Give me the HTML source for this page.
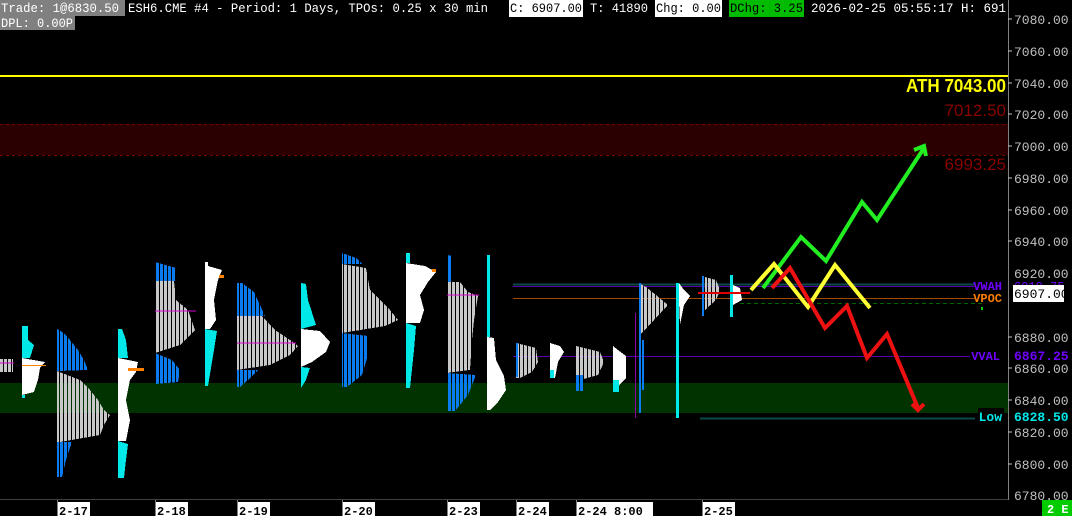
<!DOCTYPE html>
<html><head><meta charset="utf-8"><style>
html,body{margin:0;padding:0;background:#000;width:1072px;height:516px;overflow:hidden}
svg{display:block}
text{font-family:"Liberation Mono","DejaVu Sans Mono",monospace}
</style></head><body>
<svg width="1072" height="516" viewBox="0 0 1072 516" xmlns="http://www.w3.org/2000/svg">
<defs>
<pattern id="g" width="4" height="4" patternUnits="userSpaceOnUse"><rect x="0" y="0" width="3" height="4" fill="#c8c8c8"/></pattern>
<pattern id="b" width="4" height="4" patternUnits="userSpaceOnUse"><rect x="0" y="0" width="3" height="4" fill="#0a7cf0"/></pattern>
</defs>
<rect width="1072" height="516" fill="#000"/>
<rect x="0" y="383" width="1008" height="30" fill="#003300"/>
<rect x="0" y="124" width="1008" height="31" fill="#2a0000"/>
<line x1="0" y1="124.5" x2="1008" y2="124.5" stroke="#7a0000" stroke-dasharray="3,3"/>
<line x1="0" y1="155.5" x2="1008" y2="155.5" stroke="#7a0000" stroke-dasharray="3,3"/>
<rect x="0" y="75" width="1008" height="2" fill="#ffff00"/>
<text x="906" y="92" textLength="100" lengthAdjust="spacingAndGlyphs" font-size="18" font-weight="bold" fill="#ffff00" style="font-family:'Liberation Sans',sans-serif">ATH 7043.00</text>
<text x="1006" y="116" text-anchor="end" font-size="17" fill="#8a0000" style="font-family:'Liberation Sans',sans-serif">7012.50</text>
<text x="1006" y="170" text-anchor="end" font-size="17" fill="#8a0000" style="font-family:'Liberation Sans',sans-serif">6993.25</text>

<line x1="513" y1="284.5" x2="975" y2="284.5" stroke="#0d4a4a" stroke-width="2"/>
<line x1="513" y1="286.5" x2="975" y2="286.5" stroke="#5a00b0"/>
<line x1="513" y1="298.5" x2="975" y2="298.5" stroke="#a04800"/>
<line x1="740" y1="303.5" x2="985" y2="303.5" stroke="#006600" stroke-dasharray="4,3"/>
<line x1="513" y1="356.5" x2="970" y2="356.5" stroke="#5a00b0"/>
<line x1="700" y1="418.5" x2="975" y2="418.5" stroke="#0d4a4a" stroke-width="2"/>

<g shape-rendering="crispEdges">
<rect x="0" y="359" width="13" height="13" fill="url(#g)"/>
<line x1="0" y1="363" x2="14" y2="363" stroke="#d000d0"/>
<polygon points="22,326 28,326 28,340 34,345 30,358 22,358" fill="#00e8e8"/>
<polygon points="22,358 45,362 40,368 38,380 34,392 22,395" fill="#fff"/>
<rect x="22" y="395" width="3" height="3" fill="#00e8e8"/>
<rect x="22" y="365" width="24" height="1" fill="#ff8000"/>
<polygon points="57,329 64,333 70,340 78,350 84,360 88,370 57,371" fill="url(#b)"/>
<polygon points="57,371 80,380 90,390 98,400 104,410 110,415 104,425 100,435 60,442 57,442" fill="url(#g)"/>
<polygon points="57,442 72,442 66,460 62,477 57,477" fill="url(#b)"/>
<polygon points="118,329 122,329 126,340 128,358 118,358" fill="#00e8e8"/>
<polygon points="118,358 138,362 136,372 130,380 126,400 130,420 126,441 118,441" fill="#fff"/>
<polygon points="118,441 128,444 126,460 124,478 118,478" fill="#00e8e8"/>
<rect x="128" y="368" width="16" height="3" fill="#ff8000"/>
<polygon points="155,262 176,268 176,281 155,281" fill="url(#b)"/>
<polygon points="155,281 174,281 176,300 188,310 195,330 180,345 155,353" fill="url(#g)"/>
<polygon points="155,353 172,360 180,370 178,382 155,384" fill="url(#b)"/>
<line x1="155" y1="311" x2="196" y2="311" stroke="#d000d0"/>
<polygon points="205,262 208,262 208,266 222,270 218,280 214,300 216,320 210,329 205,329" fill="#fff"/>
<polygon points="205,329 217,331 214,350 208,386 205,386" fill="#00e8e8"/>
<rect x="219" y="275" width="5" height="3" fill="#ff8000"/>
<polygon points="237,283 242,283 254,292 265,316 237,316" fill="url(#b)"/>
<polygon points="237,316 262,316 275,330 290,340 298,346 290,355 270,365 237,370" fill="url(#g)"/>
<polygon points="237,370 258,370 248,380 240,387 237,387" fill="url(#b)"/>
<line x1="237" y1="343" x2="296" y2="343" stroke="#d000d0"/>
<polygon points="301,283 306,284 308,300 316,325 301,329" fill="#00e8e8"/>
<polygon points="301,329 320,331 330,342 326,352 312,362 301,367" fill="#fff"/>
<polygon points="301,367 310,368 306,380 301,388" fill="#00e8e8"/>
<polygon points="342,253 356,258 362,264 342,264" fill="url(#b)"/>
<polygon points="342,264 366,268 370,290 380,300 390,310 398,320 385,326 342,333" fill="url(#g)"/>
<polygon points="342,333 368,336 368,355 362,375 347,387 342,387" fill="url(#b)"/>
<polygon points="406,253 410,253 410,263 406,263" fill="#00e8e8"/>
<polygon points="406,263 425,266 436,272 428,282 420,295 424,310 420,323 406,323" fill="#fff"/>
<polygon points="406,323 416,326 414,350 410,388 406,388" fill="#00e8e8"/>
<rect x="432" y="269" width="4" height="3" fill="#ff8000"/>
<polygon points="447,255 452,256 452,282 447,282" fill="url(#b)"/>
<polygon points="447,282 460,282 468,292 478,296 474,320 472,340 470,370 447,373" fill="url(#g)"/>
<polygon points="447,373 476,375 468,395 455,411 447,411" fill="url(#b)"/>
<line x1="447" y1="295" x2="479" y2="295" stroke="#d000d0"/>
<polygon points="487,255 490,255 490,337 487,337" fill="#00e8e8"/>
<polygon points="487,337 494,338 496,360 504,376 506,390 498,402 490,410 487,410" fill="#fff"/>
<polygon points="516,343 536,348 538,362 532,372 520,378 516,378" fill="url(#g)"/>
<rect x="516" y="343" width="2" height="34" fill="#0a7cf0"/>
<polygon points="550,343 560,346 564,352 558,362 555,378 550,378" fill="#fff"/>
<rect x="550" y="370" width="4" height="8" fill="#00e8e8"/>
<polygon points="576,346 600,352 604,362 598,375 580,380 576,391" fill="url(#g)"/>
<rect x="576" y="375" width="8" height="16" fill="url(#b)"/>
<polygon points="613,346 618,350 626,356 626,378 613,392" fill="#fff"/>
<rect x="613" y="380" width="6" height="12" fill="#00e8e8"/>
<polygon points="639,283 646,287 656,295 668,305 640,335" fill="url(#g)"/>
<rect x="639" y="283" width="2" height="130" fill="#0a7cf0"/>
<rect x="642" y="340" width="2" height="50" fill="#0a7cf0"/>
<rect x="635" y="313" width="1" height="105" fill="#9000a0"/>
<rect x="676" y="283" width="3" height="135" fill="#00e8e8"/>
<polygon points="679,283 684,290 690,296 684,305 680,325 679,300" fill="#fff"/>
<rect x="702" y="276" width="2" height="40" fill="#0a7cf0"/>
<polygon points="705,277 716,280 720,290 716,300 705,310" fill="url(#g)"/>
<rect x="730" y="275" width="3" height="42" fill="#00e8e8"/>
<polygon points="733,285 740,288 742,300 733,305" fill="#fff"/>
<rect x="698" y="292" width="52" height="2" fill="#e00000"/>
</g>

<g fill="none" stroke-width="4" stroke-linejoin="miter">
<polyline points="763,288 801,237 826,261 862,202 877,220 924,148" stroke="#22ee22"/>
<polyline points="914,150 924,146 926,156" stroke="#22ee22"/>
<polyline points="751,290 774,264 808,307 835,265 870,308" stroke="#ffff33"/>
<polyline points="772,288 790,268 825,328 847,306 867,358 887,334 918,408" stroke="#ee1111"/>
<polyline points="912,404 918,410 924,404" stroke="#ee1111"/>
</g>

<line x1="1008.5" y1="0" x2="1008.5" y2="500" stroke="#808080"/>
<g font-size="13" fill="#c0c0c0">
<text x="1014" y="24">7080.00</text>
<text x="1014" y="56">7060.00</text>
<text x="1014" y="88">7040.00</text>
<text x="1014" y="119">7020.00</text>
<text x="1014" y="151">7000.00</text>
<text x="1014" y="183">6980.00</text>
<text x="1014" y="215">6960.00</text>
<text x="1014" y="246">6940.00</text>
<text x="1014" y="278">6920.00</text>
<text x="1014" y="342">6880.00</text>
<text x="1014" y="373">6860.00</text>
<text x="1014" y="405">6840.00</text>
<text x="1014" y="437">6820.00</text>
<text x="1014" y="469">6800.00</text>
<text x="1014" y="500">6780.00</text>
</g>
<g stroke="#c0c0c0"><line x1="1008" y1="19" x2="1012" y2="19"/><line x1="1008" y1="51" x2="1012" y2="51"/><line x1="1008" y1="83" x2="1012" y2="83"/><line x1="1008" y1="114" x2="1012" y2="114"/><line x1="1008" y1="146" x2="1012" y2="146"/><line x1="1008" y1="178" x2="1012" y2="178"/><line x1="1008" y1="210" x2="1012" y2="210"/><line x1="1008" y1="241" x2="1012" y2="241"/><line x1="1008" y1="337" x2="1012" y2="337"/><line x1="1008" y1="368" x2="1012" y2="368"/><line x1="1008" y1="400" x2="1012" y2="400"/><line x1="1008" y1="432" x2="1012" y2="432"/><line x1="1008" y1="464" x2="1012" y2="464"/></g>
<text x="1014" y="290" font-size="12" fill="#7000ff">6919.75</text>
<rect x="1013" y="285" width="51" height="17" fill="#fff"/>
<text x="1014" y="298" font-size="13" fill="#000">6907.00</text>
<text x="1014" y="360" font-size="13" fill="#7000ff" font-weight="bold">6867.25</text>
<text x="1014" y="421" font-size="13" fill="#00e8e8" font-weight="bold">6828.50</text>
<g font-size="12" font-weight="bold">
<text x="1002" y="290" text-anchor="end" fill="#7000ff">VWAH</text>
<text x="1002" y="302" text-anchor="end" fill="#ff8000">VPOC</text>
<text x="1000" y="360" text-anchor="end" fill="#7000ff">VVAL</text>
</g>
<rect x="978" y="408" width="26" height="16" fill="#000"/>
<text x="1002" y="421" text-anchor="end" font-size="13" font-weight="bold" fill="#00e8e8">Low</text>
<rect x="981" y="307" width="2" height="3" fill="#00cc00"/>

<line x1="0" y1="499.5" x2="1008" y2="499.5" stroke="#404040"/>
<g stroke="#808080">
<line x1="57.5" y1="500" x2="57.5" y2="516"/><line x1="155.5" y1="500" x2="155.5" y2="516"/><line x1="237.5" y1="500" x2="237.5" y2="516"/><line x1="342.5" y1="500" x2="342.5" y2="516"/><line x1="447.5" y1="500" x2="447.5" y2="516"/><line x1="516.5" y1="500" x2="516.5" y2="516"/><line x1="576.5" y1="500" x2="576.5" y2="516"/><line x1="702.5" y1="500" x2="702.5" y2="516"/>
</g>
<g fill="#fff">
<rect x="58" y="502" width="32" height="14"/><rect x="156" y="502" width="32" height="14"/><rect x="238" y="502" width="32" height="14"/><rect x="343" y="502" width="32" height="14"/><rect x="448" y="502" width="32" height="14"/><rect x="517" y="502" width="32" height="14"/><rect x="577" y="502" width="76" height="14"/><rect x="703" y="502" width="32" height="14"/>
</g>
<g font-size="12" fill="#000" font-weight="bold">
<text x="59" y="515">2-17</text><text x="157" y="515">2-18</text><text x="239" y="515">2-19</text><text x="344" y="515">2-20</text><text x="449" y="515">2-23</text><text x="518" y="515">2-24</text><text x="578" y="515">2-24  8:00</text><text x="704" y="515">2-25</text>
</g>
<rect x="1042" y="500" width="30" height="16" fill="#00cc00"/>
<text x="1047" y="513" font-size="12" fill="#fff" font-weight="bold">2 E</text>

<rect x="0" y="0" width="125" height="16" fill="#808080"/>
<rect x="0" y="16" width="75" height="14" fill="#808080"/>
<rect x="509" y="0" width="74" height="17" fill="#fff"/>
<rect x="655" y="0" width="67" height="17" fill="#fff"/>
<rect x="729" y="0" width="75" height="17" fill="#00bb00"/>
<g font-size="13">
<text x="1" y="12" fill="#fff" textLength="118" lengthAdjust="spacingAndGlyphs">Trade: 1@6830.50</text>
<text x="128" y="12" fill="#fff" textLength="360" lengthAdjust="spacingAndGlyphs">ESH6.CME #4 - Period: 1 Days, TPOs: 0.25 x 30 min</text>
<text x="1" y="27" fill="#fff" textLength="72" lengthAdjust="spacingAndGlyphs">DPL: 0.00P</text>
<text x="510" y="12" fill="#000" textLength="72" lengthAdjust="spacingAndGlyphs">C: 6907.00</text>
<text x="590" y="12" fill="#fff" textLength="58" lengthAdjust="spacingAndGlyphs">T: 41890</text>
<text x="656" y="12" fill="#000" textLength="65" lengthAdjust="spacingAndGlyphs">Chg: 0.00</text>
<text x="730" y="12" fill="#000" textLength="73" lengthAdjust="spacingAndGlyphs">DChg: 3.25</text>
<text x="811" y="12" fill="#fff" textLength="195" lengthAdjust="spacingAndGlyphs">2026-02-25 05:55:17 H: 691</text>
</g>
</svg>
</body></html>
